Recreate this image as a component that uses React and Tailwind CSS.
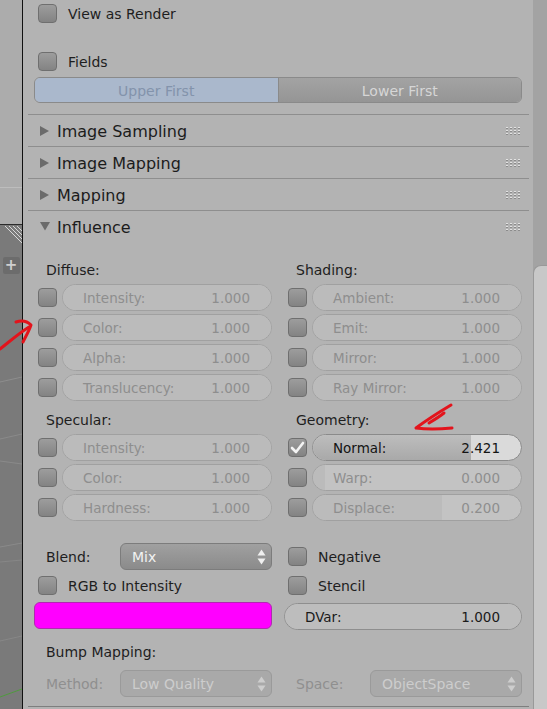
import React from "react";

const Check = ({ checked }) => (
  <div className="w-[19px] h-[19px] shrink-0 rounded-[4px] border border-[#6f6f6f] bg-gradient-to-b from-[#9d9d9d] to-[#838383] flex items-center justify-center">
    {checked && (
      <svg width="15" height="13" viewBox="0 0 15 13">
        <path d="M2 7 L6 11 L13 2" fill="none" stroke="#f4f4f4" strokeWidth="2.6" strokeLinecap="round" strokeLinejoin="round" />
      </svg>
    )}
  </div>
);

const Grip = () => (
  <svg width="15" height="8" viewBox="0 0 15 8">
    {[0, 1, 2, 3].map((i) =>
      [0, 1, 2].map((j) => (
        <g key={i + "-" + j}>
          <rect x={1 + i * 4} y={j * 3} width="2" height="1" fill="#e2e2e2" />
          <rect x={1 + i * 4} y={j * 3 + 1} width="2" height="1" fill="#8c8c8c" />
        </g>
      ))
    )}
  </svg>
);

const Header = ({ title, open, last }) => (
  <>
    <div className="h-[31px] flex items-center pl-[17px] pr-[13px]">
      {open ? (
        <svg width="10" height="9" viewBox="0 0 10 9" className="mr-[7px]">
          <path d="M0 0 L10 0 L5 8.5 Z" fill="#6b6b6b" />
        </svg>
      ) : (
        <svg width="9" height="10" viewBox="0 0 9 10" className="mr-[8px]">
          <path d="M0 0 L9 5 L0 10 Z" fill="#6b6b6b" />
        </svg>
      )}
      <span className="text-[16px] text-[#1c1c1c] flex-1 leading-none pt-[2px]">{title}</span>
      <Grip />
    </div>
    {!last && <div className="h-px bg-[#8e8e8e] ml-[5px] mr-[4px]" />}
  </>
);

const Slider = ({ label, value, fill = 100, active, dark }) => (
  <div
    className={`relative h-[27px] flex-1 rounded-full border overflow-hidden flex items-center justify-between pl-[20px] pr-[21px] pt-[2px] text-[13.5px] ${
      active ? "border-[#8a8a8a] bg-[#dadada] text-[#141414]" : dark ? "border-[#8e8e8e] bg-[#bdbdbd] text-[#1a1a1a]" : "border-[#a0a0a0] bg-[#c3c3c3] text-[#8e8e8e]"
    }`}
  >
    <div
      className={`absolute left-0 top-0 bottom-0 ${active ? "bg-gradient-to-b from-[#bdbdbd] to-[#a9a9a9]" : dark ? "bg-[#bdbdbd]" : "bg-[#bbbbbb]"}`}
      style={{ width: fill + "%" }}
    />
    <span className="relative">{label}</span>
    <span className="relative">{value}</span>
  </div>
);

const SliderRow = (props) => (
  <div className="h-[30px] flex items-start">
    <div className="h-[27px] flex items-center ml-[4px] mr-[5px]">
      <Check checked={props.checked} />
    </div>
    <Slider {...props} />
  </div>
);

const Label = ({ children, muted }) => (
  <div className={`h-[30px] flex items-center pl-[12px] pt-[2px] text-[14px] ${muted ? "text-[#8f8f8f]" : "text-[#1e1e1e]"}`}>{children}</div>
);

const CheckRow = ({ label, h = "h-[30px]" }) => (
  <div className={`${h} flex items-center pl-[4px] gap-[11px] text-[14px] text-[#1e1e1e]`}>
    <Check />
    <span className="pt-[2px]">{label}</span>
  </div>
);

const Arrows = ({ color }) => (
  <svg width="9" height="16" viewBox="0 0 9 16">
    <path d="M0.5 6.5 L4.5 0.5 L8.5 6.5 Z" fill={color} />
    <path d="M0.5 9.5 L4.5 15.5 L8.5 9.5 Z" fill={color} />
  </svg>
);

const Dropdown = ({ text, disabled }) => (
  <div
    className={`h-[27px] flex-1 rounded-[6px] border flex items-center justify-between pl-[11px] pr-[5px] text-[14px] ${
      disabled ? "border-[#9a9a9a] bg-[#a9a9a9] text-[#cdcdcd]" : "border-[#7c7c7c] bg-gradient-to-b from-[#a0a0a0] to-[#8b8b8b] text-[#f2f2f2]"
    }`}
  >
    <span className="pt-[2px]">{text}</span>
    <Arrows color={disabled ? "#cdcdcd" : "#f0f0f0"} />
  </div>
);

const Viewport = () => (
  <div className="w-[22px] h-full flex flex-col">
    <div className="h-[224px] bg-[#acacac] flex flex-col">
      <div className="h-[187px]" />
      <div className="h-px bg-[#bdbdbd]" />
    </div>
    <div className="h-px bg-[#2a2a2a]" />
    <div className="relative flex-1 bg-[#7a7a7a] flex flex-col items-center">
      <svg className="absolute inset-0" width="22" height="484" viewBox="0 225 22 484">
        <path d="M0 382 L22 377" stroke="#8d8d8d" strokeWidth="1" />
        <path d="M0 439 L22 434" stroke="#8a8a8a" strokeWidth="1" />
        <path d="M0 461 L22 464" stroke="#8a8a8a" strokeWidth="1" />
        <path d="M0 547 L22 543" stroke="#8a8a8a" strokeWidth="1" />
        <path d="M0 562 L22 560" stroke="#878787" strokeWidth="1" />
        <path d="M0 641 L22 636" stroke="#878787" strokeWidth="1" />
        <path d="M0 697 L22 689" stroke="#4f9a3e" strokeWidth="1" />
        <g stroke="#d8d8d8" strokeWidth="1">
          <path d="M9 226 L22 239" />
          <path d="M13 226 L22 235" />
          <path d="M17 226 L22 231" />
          <path d="M5 226 L22 243" />
        </g>
      </svg>
      <div className="relative mt-[32px] w-[17px] h-[17px] rounded-[2px] bg-[#6c6c6c] flex items-center justify-center text-[#cfcfcf] text-[15px] font-bold leading-none">+</div>
    </div>
  </div>
);

export default function App() {
  return (
    <div className="relative flex w-[547px] h-[709px] overflow-hidden bg-[#b3b3b3] font-['DejaVu_Sans',sans-serif]">
      <Viewport />
      <div className="w-px h-full bg-[#111111]" />
      <div className="w-[510px] h-full bg-[#b3b3b3] flex flex-col">
        <div className="px-[11px]">
          <CheckRow label="View as Render" h="h-[26px]" />
          <div className="mt-[22px]">
            <CheckRow label="Fields" h="h-[26px]" />
          </div>
          <div className="mt-[3px] h-[26px] flex rounded-[6px] border border-[#8a8a8a] overflow-hidden text-[14px]">
            <div className="flex-1 bg-[#aab8cc] text-[#8393ab] flex items-center justify-center pt-[2px]">Upper First</div>
            <div className="w-px bg-[#8a8a8a]" />
            <div className="flex-1 bg-gradient-to-b from-[#a3a3a3] to-[#959595] text-[#d6d6d6] flex items-center justify-center pt-[2px]">Lower First</div>
          </div>
        </div>
        <div className="mt-[11px] h-px bg-[#8e8e8e] ml-[5px] mr-[4px]" />
        <Header title="Image Sampling" />
        <Header title="Image Mapping" />
        <Header title="Mapping" />
        <Header title="Influence" open last />

        <div className="px-[11px] pt-[12px]">
          <div className="grid grid-cols-2 gap-x-[12px]">
            <div>
              <Label>Diffuse:</Label>
              <SliderRow label="Intensity:" value="1.000" />
              <SliderRow label="Color:" value="1.000" />
              <SliderRow label="Alpha:" value="1.000" />
              <SliderRow label="Translucency:" value="1.000" />
              <Label>Specular:</Label>
              <SliderRow label="Intensity:" value="1.000" />
              <SliderRow label="Color:" value="1.000" />
              <SliderRow label="Hardness:" value="1.000" />
            </div>
            <div>
              <Label>Shading:</Label>
              <SliderRow label="Ambient:" value="1.000" />
              <SliderRow label="Emit:" value="1.000" />
              <SliderRow label="Mirror:" value="1.000" />
              <SliderRow label="Ray Mirror:" value="1.000" />
              <Label>Geometry:</Label>
              <SliderRow label="Normal:" value="2.421" fill={76} active checked />
              <SliderRow label="Warp:" value="0.000" fill={6} />
              <SliderRow label="Displace:" value="0.200" fill={62} />
            </div>
          </div>

          <div className="mt-[19px] grid grid-cols-2 gap-x-[12px]">
            <div>
              <div className="h-[27px] flex items-center">
                <span className="w-[86px] pl-[12px] pt-[2px] text-[14px] text-[#1e1e1e]">Blend:</span>
                <Dropdown text="Mix" />
              </div>
              <CheckRow label="RGB to Intensity" />
              <div className="mt-[2px] h-[27px] rounded-[6px] border border-[#b02ab0] bg-[#ff00ff]" />
            </div>
            <div>
              <CheckRow label="Negative" h="h-[27px]" />
              <CheckRow label="Stencil" />
              <div className="mt-[3px] flex">
                <Slider label="DVar:" value="1.000" dark />
              </div>
            </div>
          </div>

          <div className="mt-[6px]">
            <Label>Bump Mapping:</Label>
          </div>
          <div className="mt-[4px] grid grid-cols-2 gap-x-[12px]">
            <div className="h-[27px] flex items-center">
              <span className="w-[86px] pl-[12px] pt-[2px] text-[14px] text-[#8f8f8f]">Method:</span>
              <Dropdown text="Low Quality" disabled />
            </div>
            <div className="h-[27px] flex items-center">
              <span className="w-[86px] pl-[12px] pt-[2px] text-[14px] text-[#8f8f8f]">Space:</span>
              <Dropdown text="ObjectSpace" disabled />
            </div>
          </div>
        </div>
        <div className="mt-[9px] h-px bg-[#7e7e7e] ml-[5px] mr-[4px]" />
      </div>
      <div className="w-[14px] h-full bg-[#a3a3a3] flex flex-col">
        <div className="mt-[265px] flex-1 rounded-tl-[8px] border-l border-t border-[#999999] bg-[#c8c8c8]" />
      </div>

      <svg className="absolute inset-0 pointer-events-none" width="547" height="709" viewBox="0 0 547 709">
        <g fill="none" stroke="#e3141c" strokeWidth="3" strokeLinecap="round" strokeLinejoin="round">
          <path d="M0 349 C9 342 18 334 29 327" />
          <path d="M16 322 C22 320 27 321 31 325 C29 331 26 336 23 342" />
          <path d="M451 405 C441 411 428 419 416 428 C430 430 442 429 452 428" />
          <path d="M444 413 C439 417 434 420 429 423" />
        </g>
      </svg>
    </div>
  );
}
